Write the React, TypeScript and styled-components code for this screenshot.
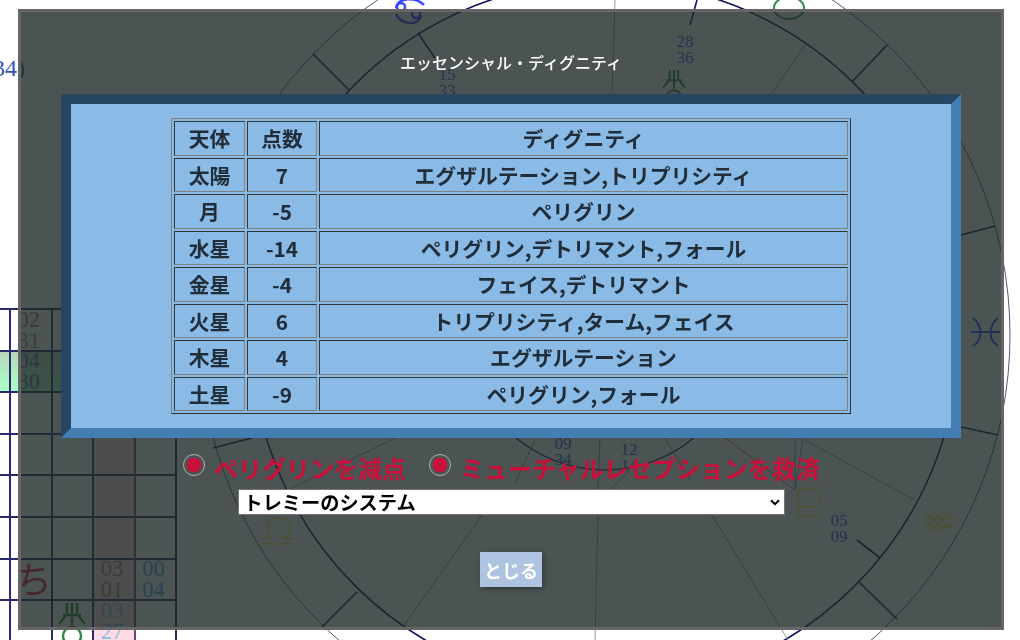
import styled, { createGlobalStyle } from "styled-components";

const GlobalStyle = createGlobalStyle`
  html, body {
    margin: 0;
    padding: 0;
    height: 100%;
    overflow: hidden;
    background: #ffffff;
    font-family: "Noto Sans CJK JP", "Noto Sans", sans-serif;
  }
`;

/* the chart page that sits behind the dialog */
const Backdrop = styled.div`
  position: absolute;
  inset: 0;
  overflow: hidden;
`;

const ChartSvg = styled.svg`
  position: absolute;
  left: 0;
  top: 0;
`;

const PageNote = styled.span`
  position: absolute;
  left: -7px;
  top: 55px;
  font: 24px "Liberation Serif", serif;
  color: #3355bb;
`;

const PageDash = styled.span`
  position: absolute;
  left: 0;
  top: 543px;
  width: 7px;
  height: 2px;
  background: #3f5cff;
`;

const HouseGrid = styled.div`
  position: absolute;
  left: -30.6px;
  top: 308px;
  display: grid;
  grid-template-columns: repeat(5, 41.6px);
  grid-auto-rows: 41.6px;
  border-top: 2px solid #2a2a6a;
`;

const Cell = styled.div<{ $band?: boolean; $pink?: boolean }>`
  box-sizing: border-box;
  position: relative;
  display: flex;
  flex-direction: column;
  align-items: center;
  justify-content: center;
  padding-right: 4px;
  border-right: 2px solid ${(p) => (p.$pink ? "#6a4a7a" : "#2a2a6a")};
  border-bottom: 2px solid #2a2a6a;
  background: ${(p) =>
    p.$band
      ? "linear-gradient(#b8d8b8, #aaffc8)"
      : p.$pink
        ? "#ffdde2"
        : "#ffffff"};
  font: 22.5px/21px "Liberation Serif", serif;
  color: ${(p) => (p.$band ? "#5577aa" : "#aa8066")};
`;

const Deg = styled.span<{ $tone?: string }>`
  color: ${(p) => p.$tone ?? "inherit"};
`;

const Kana = styled.span`
  position: absolute;
  left: 4px;
  top: -4px;
  font: 37px/44px "Noto Sans CJK JP", sans-serif;
  color: #e0204a;
`;

/* dialog */
const Overlay = styled.div`
  position: fixed;
  left: 18px;
  top: 9px;
  box-sizing: border-box;
  width: 986px;
  height: 621px;
  display: flex;
  flex-direction: column;
  align-items: center;
  padding-top: 39px;
  border: 3px solid #666666;
  background: rgba(31, 41, 40, 0.8);
  background-clip: padding-box;
`;

const Title = styled.h2`
  margin: 0 0 20px;
  font-size: 16px;
  line-height: 23px;
  font-weight: 500;
  color: #ffffff;
`;

const Panel = styled.div`
  box-sizing: border-box;
  width: 900px;
  height: 344px;
  display: flex;
  align-items: center;
  justify-content: center;
  border: 10px solid;
  border-color: #264663 #447eb2 #447eb2 #264663;
  background: #8abae6;
`;

const Table = styled.table`
  width: 680px;
  table-layout: fixed;
  border-collapse: separate;
  border-spacing: 2px;
  border: 1px solid;
  border-color: #808080 #333333 #333333 #808080;
  color: #212d38;
  font-size: 20.8px;
  font-weight: 700;
`;

const Th = styled.th`
  box-sizing: border-box;
  height: 34.5px;
  padding: 0;
  border: 1px solid;
  border-color: #2f3438 #808080 #808080 #2f3438;
  text-align: center;
  font-weight: 700;
  line-height: 28px;
`;

const Td = styled(Th).attrs({ as: "td" })``;

const FirstCol = styled.col`
  width: 71px;
`;

const SecondCol = styled.col`
  width: 70px;
`;

const OptionRow = styled.div`
  align-self: flex-start;
  display: flex;
  align-items: flex-start;
  margin: 12px 0 0 162px;
`;

const Radio = styled.input.attrs({ type: "radio" })`
  appearance: none;
  box-sizing: border-box;
  width: 22px;
  height: 22px;
  margin: 4px 9px 0 0;
  border: 1px solid #b0b0b0;
  border-radius: 50%;
  background: radial-gradient(circle, #c8103a 0 7px, transparent 7.6px);
`;

const RadioLabel = styled.label`
  margin-right: 23px;
  font-size: 24px;
  line-height: 35px;
  font-weight: 700;
  color: #c8103a;
`;

const SelectBox = styled.div`
  position: relative;
  box-sizing: border-box;
  width: 547px;
  height: 26px;
  margin-top: 4px;
  display: flex;
  align-items: center;
  overflow: hidden;
  border: 1px solid #767676;
  background: #ffffff;
`;

const SystemSelect = styled.select`
  appearance: none;
  flex: none;
  width: 100%;
  height: 32px;
  padding: 0 0 0 5px;
  border: none;
  background: transparent;
  color: #000000;
  font-family: inherit;
  font-size: 19.2px;
  font-weight: 700;
`;

const SelectArrow = styled.svg`
  position: absolute;
  right: 4px;
  top: 9px;
  pointer-events: none;
`;

const CloseButton = styled.button`
  box-sizing: border-box;
  width: 62px;
  height: 35px;
  margin-top: 37px;
  padding: 0;
  border: none;
  background: #adc3df;
  box-shadow: 2px 2px 6px rgba(0, 0, 0, 0.35);
  color: #ffffff;
  font-family: inherit;
  font-size: 18px;
  font-weight: 700;
`;

const rows = [
  ["太陽", "7", "エグザルテーション,トリプリシティ"],
  ["月", "-5", "ペリグリン"],
  ["水星", "-14", "ペリグリン,デトリマント,フォール"],
  ["金星", "-4", "フェイス,デトリマント"],
  ["火星", "6", "トリプリシティ,ターム,フェイス"],
  ["木星", "4", "エグザルテーション"],
  ["土星", "-9", "ペリグリン,フォール"],
];

const navy = "#101060";
const thin = "#555577";
const gold = "#ffee55";
const green = "#2e8b45";
const blue = "#4455dd";
const signBlue = "#3344ff";

// short ticks between the rings, x1 y1 x2 y2
const ticks = [
  [313, 54, 349, 90],
  [887, 45, 852, 82],
  [860, 583, 897, 619],
  [322, 627, 357, 592],
  [961, 235, 995, 226],
  [961, 427, 998, 435],
  [213, 448, 252, 438],
  [418, 33, 435, 58],
  [697, 0, 690, 25],
  [857, 540, 880, 558],
];

// aspect lines inside the wheel
const aspects = [
  [612, 93, 615, 0],
  [772, 93, 805, 45],
  [598, 515, 595, 640],
  [712, 515, 788, 640],
  [482, 515, 403, 627],
  [288, 490, 395, 438],
  [805, 440, 918, 502],
  [535, 440, 515, 483],
  [600, 438, 598, 490],
  [665, 438, 690, 480],
  [630, 470, 610, 490],
];

const degrees = [
  [685, 47, "28"],
  [685, 63, "36"],
  [447, 80, "15"],
  [447, 96, "33"],
  [563, 449, "09"],
  [563, 465, "34"],
  [629, 455, "12"],
  [629, 471, "14"],
  [839, 526, "05"],
  [839, 542, "09"],
] as const;

function Uranus({ x, y, scale }: { x: number; y: number; scale: number }) {
  return (
    <g
      transform={`translate(${x} ${y}) scale(${scale})`}
      fill="none"
      stroke={green}
      strokeWidth="2.4"
    >
      <path d="M-5 0V12M5 0V12M0 0V22M-9 12H9M-6 12L-13 21M6 12L13 21" />
      <circle cx="0" cy="33" r="9" />
    </g>
  );
}

function Wheel() {
  return (
    <ChartSvg width="1020" height="640" viewBox="0 0 1020 640">
      <g fill="none">
        <circle cx="605" cy="335" r="405" stroke={thin} strokeWidth="1" />
        <circle cx="605" cy="335" r="354" stroke={navy} strokeWidth="1.6" />
        <circle cx="605" cy="331" r="139" stroke={navy} strokeWidth="1.2" />
        {ticks.map(([a, b, c, d]) => (
          <line key={`${a}-${b}`} x1={a} y1={b} x2={c} y2={d} stroke={navy} strokeWidth="1.6" />
        ))}
        {aspects.map(([a, b, c, d]) => (
          <line key={`${a}-${b}`} x1={a} y1={b} x2={c} y2={d} stroke="#999999" strokeWidth="1" />
        ))}
        <line x1="725" y1="438" x2="795" y2="490" stroke="#e0607a" strokeWidth="1" />
        <line x1="795" y1="438" x2="795" y2="490" stroke="#55aadd" strokeWidth="1" />
        <line x1="803" y1="438" x2="795" y2="490" stroke="#55aadd" strokeWidth="1" />

        {/* cancer */}
        <g stroke={signBlue} strokeWidth="2.4">
          <circle cx="401" cy="7" r="4" />
          <circle cx="416" cy="14" r="4" />
          <path d="M396 8C398 -3 416 -3 424 5M421 15C419 26 402 26 396 14" />
        </g>
        {/* taurus */}
        <ellipse cx="789" cy="8" rx="15" ry="11" stroke={green} strokeWidth="2" />
        {/* pisces */}
        <path
          d="M973 318C983 326 983 340 973 346M998 318C988 326 988 340 998 346M971 332H1000"
          stroke={signBlue}
          strokeWidth="2"
        />
        {/* aquarius */}
        <path
          d="M924 521l5-6 4 6 5-6 4 6 5-6 4 6M924 530l5-6 4 6 5-6 4 6 5-6 4 6"
          stroke={gold}
          strokeWidth="2"
        />
        {/* pluto */}
        <path
          d="M798 507V489H811C825 489 825 507 811 507H798M798 507V516H822"
          stroke={gold}
          strokeWidth="1.6"
        />
        {/* libra */}
        <path
          d="M263 538H271C262 530 266 518 278 518C290 518 294 530 285 538H293M263 544H293"
          stroke={gold}
          strokeWidth="1.8"
        />
      </g>
      <Uranus x={674} y={70} scale={0.85} />
      <Uranus x={72} y={603} scale={1} />
      <g fontFamily="Liberation Serif" fontSize="17" fill={blue} textAnchor="middle">
        {degrees.map(([x, y, t]) => (
          <text key={`${x}-${y}`} x={x} y={y}>
            {t}
          </text>
        ))}
      </g>
    </ChartSvg>
  );
}

function Houses() {
  return (
    <HouseGrid>
      {/* row 1 */}
      <Cell />
      <Cell>
        <Deg>02</Deg>
        <Deg>31</Deg>
      </Cell>
      <Cell />
      <Cell $pink />
      <Cell />
      {/* row 2 */}
      <Cell $band />
      <Cell $band>
        <Deg>04</Deg>
        <Deg>30</Deg>
      </Cell>
      <Cell $band />
      <Cell $band />
      <Cell $band />
      {/* rows 3 to 6 */}
      {[0, 1, 2, 3].flatMap((r) => [
        <Cell key={`${r}a`} />,
        <Cell key={`${r}b`} />,
        <Cell key={`${r}c`} />,
        <Cell key={`${r}d`} $pink />,
        <Cell key={`${r}e`} />,
      ])}
      {/* row 7 */}
      <Cell />
      <Cell>
        <Kana>ち</Kana>
      </Cell>
      <Cell />
      <Cell $pink>
        <Deg>03</Deg>
        <Deg>01</Deg>
      </Cell>
      <Cell>
        <Deg $tone="#5599ee">00</Deg>
        <Deg $tone="#5599ee">04</Deg>
      </Cell>
      {/* row 8 */}
      <Cell />
      <Cell />
      <Cell />
      <Cell $pink>
        <Deg $tone="#88bbee">03</Deg>
        <Deg $tone="#88bbee">27</Deg>
      </Cell>
      <Cell />
    </HouseGrid>
  );
}

export default function App() {
  return (
    <>
      <GlobalStyle />
      <Backdrop>
        <PageNote>34)</PageNote>
        <PageDash />
        <Houses />
        <Wheel />
      </Backdrop>
      <Overlay>
        <Title>エッセンシャル・ディグニティ</Title>
        <Panel>
          <Table>
            <colgroup>
              <FirstCol />
              <SecondCol />
              <col />
            </colgroup>
            <thead>
              <tr>
                <Th>天体</Th>
                <Th>点数</Th>
                <Th>ディグニティ</Th>
              </tr>
            </thead>
            <tbody>
              {rows.map(([planet, score, names]) => (
                <tr key={planet}>
                  <Td>{planet}</Td>
                  <Td>{score}</Td>
                  <Td>{names}</Td>
                </tr>
              ))}
            </tbody>
          </Table>
        </Panel>
        <OptionRow>
          <Radio id="peregrine" name="peregrine" defaultChecked />
          <RadioLabel htmlFor="peregrine">ペリグリンを減点</RadioLabel>
          <Radio id="mutual" name="mutual" defaultChecked />
          <RadioLabel htmlFor="mutual">ミューチャルレセプションを救済</RadioLabel>
        </OptionRow>
        <SelectBox>
          <SystemSelect defaultValue="ptolemy">
            <option value="ptolemy">トレミーのシステム</option>
          </SystemSelect>
          <SelectArrow width="10" height="7" viewBox="0 0 10 7">
            <path d="M1 1.2l4 4 4-4" fill="none" stroke="#000" strokeWidth="2" />
          </SelectArrow>
        </SelectBox>
        <CloseButton>とじる</CloseButton>
      </Overlay>
    </>
  );
}
